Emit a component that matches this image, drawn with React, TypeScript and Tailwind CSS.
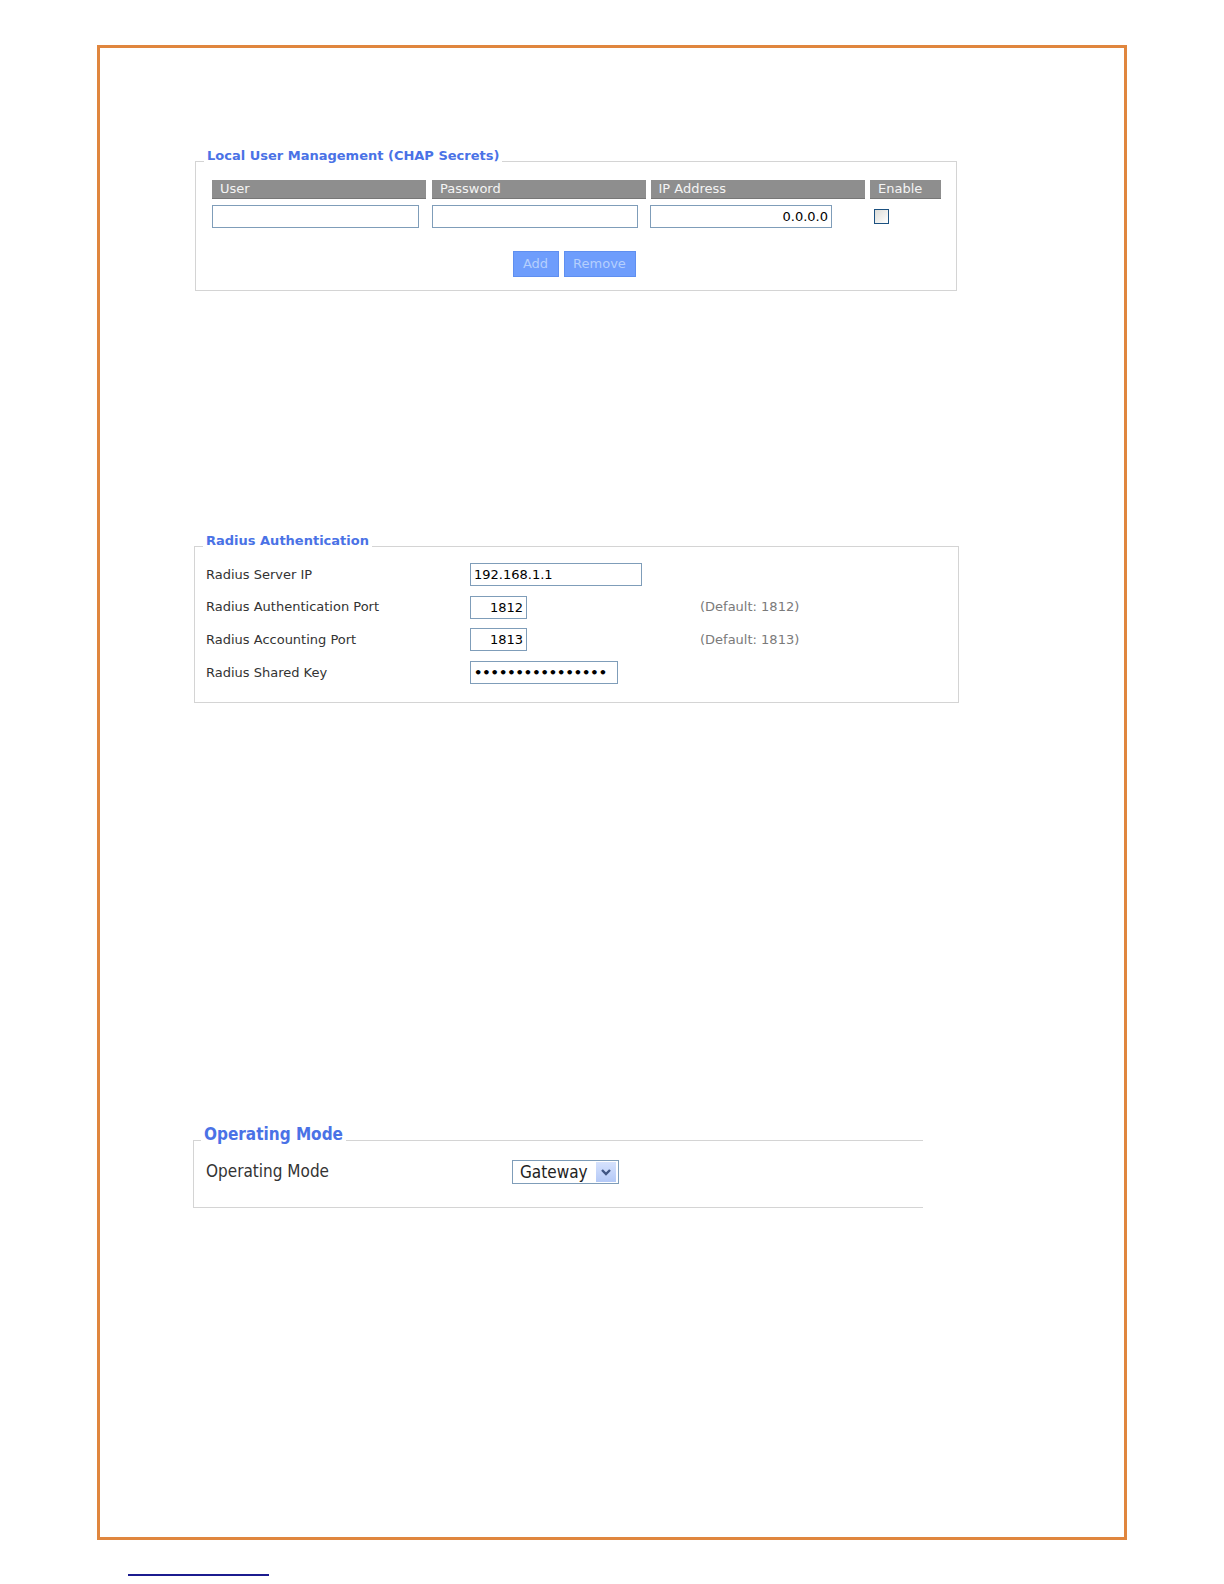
const font = { fontFamily: "'DejaVu Sans', Tahoma, Verdana, sans-serif" };
const bigFont = { fontFamily: "'DejaVu Sans Condensed', 'DejaVu Sans', Tahoma, sans-serif" };

function TextBox({ value, className, align = 'left', type = 'text' }: { value: string; className: string; align?: 'left' | 'right'; type?: string }) {
  return (
    <input
      type={type}
      readOnly
      defaultValue={value}
      className={`h-[23px] border border-[#7f9db9] bg-white px-[3px] text-[13px] text-black outline-none ${align === 'right' ? 'text-right' : 'text-left'} ${className}`}
    />
  );
}

function HeaderCell({ label, className }: { label: string; className: string }) {
  return (
    <div className={`h-[19px] bg-[#8e8e8e] border-b border-[#777] pl-[8px] text-[13px] leading-[18px] text-[#f4f4f4] ${className}`}>
      {label}
    </div>
  );
}

function RadiusRow({ label, children, hint }: { label: string; children: React.ReactNode; hint?: string }) {
  return (
    <div className="flex h-[23px] items-center">
      <div className="w-[264px] text-[13px] text-[#333]">{label}</div>
      <div className="w-[230px] flex items-center">{children}</div>
      {hint && <div className="text-[13px] text-[#7a7a7a]">{hint}</div>}
    </div>
  );
}

export default function App() {
  return (
    <div className="w-full bg-white pt-[45px] pl-[97px] pb-[20px]" style={font}>
      <div className="w-[1030px] h-[1495px] border-[3px] border-[#e0863e]">
        {/* Local users */}
        <fieldset className="ml-[95px] mt-[99px] w-[762px] border border-[#d4d4d4]">
          <legend className="ml-[8px] px-[3px] pb-[10px] text-[13px] font-bold leading-[18px] text-[#4a72e6]">
            Local User Management (CHAP Secrets)
          </legend>
          <div className="pl-[16px] pt-[5px] pb-[13px]">
            <div className="flex">
              <HeaderCell label="User" className="w-[214px]" />
              <HeaderCell label="Password" className="ml-[6px] w-[213.5px]" />
              <HeaderCell label="IP Address" className="ml-[5px] w-[214.5px]" />
              <HeaderCell label="Enable" className="ml-[5px] w-[71px]" />
            </div>
            <div className="mt-[6px] flex items-center">
              <TextBox value="" className="w-[206.5px]" />
              <TextBox value="" className="ml-[13px] w-[206.5px]" />
              <TextBox value="0.0.0.0" align="right" className="ml-[12px] w-[182px] text-[#3a2060]" />
              <span className="ml-[41.5px] h-[15px] w-[15px] border border-[#1c5180] bg-linear-to-br from-[#dcdcd7] to-white" />
            </div>
            <div className="mt-[23px] flex justify-center gap-[5px] pr-[20px]">
              <button className="h-[26px] w-[46px] border border-[#5f8ff0] bg-[#6e9dfc] text-[13px] text-[#b5cffd]">Add</button>
              <button className="h-[26px] w-[72px] border border-[#5f8ff0] bg-[#6e9dfc] text-[13px] text-[#b5cffd]">Remove</button>
            </div>
          </div>
        </fieldset>

        {/* Radius */}
        <fieldset className="ml-[94px] mt-[241px] w-[765px] border border-[#d4d4d4]">
          <legend className="ml-[8px] px-[3px] pb-[10px] text-[13px] font-bold leading-[18px] text-[#4a72e6]">
            Radius Authentication
          </legend>
          <div className="flex flex-col gap-[9.7px] pl-[11px] pt-[3px] pb-[18px]">
            <RadiusRow label="Radius Server IP">
              <TextBox value="192.168.1.1" className="w-[172px]" />
            </RadiusRow>
            <RadiusRow label="Radius Authentication Port" hint="(Default: 1812)">
              <TextBox value="1812" align="right" className="w-[57px]" />
            </RadiusRow>
            <RadiusRow label="Radius Accounting Port" hint="(Default: 1813)">
              <TextBox value="1813" align="right" className="w-[57px]" />
            </RadiusRow>
            <RadiusRow label="Radius Shared Key">
              <TextBox value="aaaaaaaaaaaaaaaa" type="password" className="w-[148px] text-[13px] font-bold" />
            </RadiusRow>
          </div>
        </fieldset>

        {/* Operating mode */}
        <fieldset className="ml-[93px] mt-[421px] w-[730px] border border-r-0 border-[#d4d4d4]" style={bigFont}>
          <legend className="ml-[7px] px-[3px] pb-[12px] text-[17px] font-bold leading-[20px] text-[#4a72e6]">
            Operating Mode
          </legend>
          <div className="flex items-center pl-[12px] pt-[3px] pb-[22px]">
            <div className="w-[306px] text-[17px] text-[#333]">Operating Mode</div>
            <div className="flex h-[24px] w-[107px] items-center border border-[#7f9db9] bg-white pl-[7px] pr-[2px]">
              <span className="flex-1 text-[17px] leading-[20px] text-[#222]">Gateway</span>
              <span className="flex h-[20px] w-[20px] items-center justify-center bg-linear-to-b from-[#d6e2fd] to-[#b4c9f7]">
                <svg width="10" height="8" viewBox="0 0 10 8">
                  <path d="M1 2 L5 6 L9 2" fill="none" stroke="#3f5583" strokeWidth="2.4" />
                </svg>
              </span>
            </div>
          </div>
        </fieldset>
      </div>
      <div className="mt-[33.5px] ml-[31px] h-[2px] w-[140.5px] bg-[#1b1b8f]" />
    </div>
  );
}
